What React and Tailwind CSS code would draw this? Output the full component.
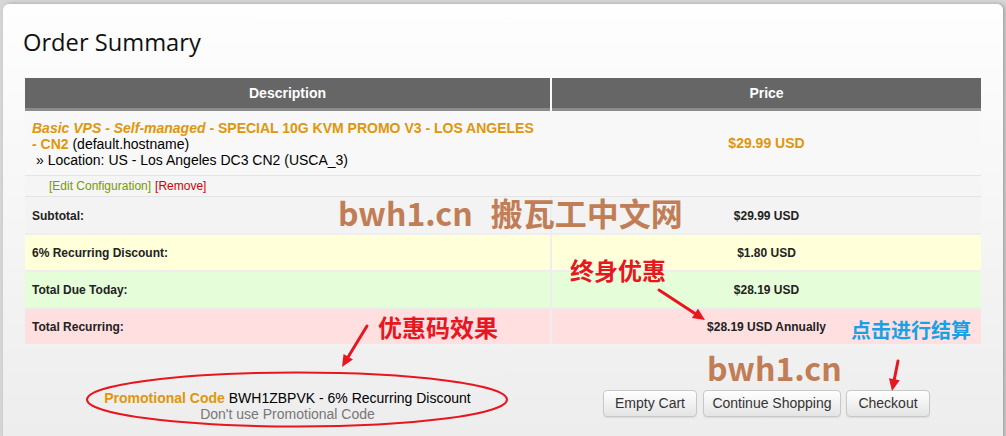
import React from "react";

const sans = { fontFamily: '"Liberation Sans", Arial, sans-serif' };
const cjk = { fontFamily: '"Noto Sans CJK SC", "Noto Sans", sans-serif' };

const summaryRows = [
    { label: "Subtotal:", value: "$29.99 USD", bg: "bg-[#f3f3f3]", h: "h-[36px]" },
    { label: "6% Recurring Discount:", value: "$1.80 USD", bg: "bg-[#ffffd9]", h: "h-[35px]" },
    { label: "Total Due Today:", value: "$28.19 USD", bg: "bg-[#e5fdd9]", h: "h-[35px]" },
    { label: "Total Recurring:", value: "$28.19 USD Annually", bg: "bg-[#ffdfdf]", h: "h-[35px]" },
];

const Arrow = ({ x1, y1, x2, y2 }) => {
    // arrow head at x2,y2
    const a = Math.atan2(y2 - y1, x2 - x1);
    const len = 12;
    const w = 5.5;
    const bx = x2 - len * Math.cos(a);
    const by = y2 - len * Math.sin(a);
    const px = -Math.sin(a) * w;
    const py = Math.cos(a) * w;
    return (
        <g>
            <line x1={x1} y1={y1} x2={bx} y2={by} stroke="#e8161e" strokeWidth="3" strokeLinecap="round" />
            <polygon points={`${x2},${y2} ${bx + px},${by + py} ${bx - px},${by - py}`} fill="#e8161e" />
        </g>
    );
};

const App = () => {
    return (
        <div className="relative w-[1006px] h-[436px] overflow-hidden bg-[#d6d6d6] pl-[3px] pt-[4px]" style={sans}>
            {/* Panel */}
            <div className="w-[1000px] h-[460px] rounded-md bg-gradient-to-b from-[#fefefe] to-[#ececec] shadow-[2px_0_4px_rgba(0,0,0,0.25)] px-[22px]">
                <h1 className="pt-[20px] mb-[18px] text-[23.7px] leading-[36px] text-[#111] -ml-[2px]" style={{ fontFamily: '"Open Sans", sans-serif' }}>
                    Order Summary
                </h1>

                {/* Table */}
                <div className="w-[956px]">
                    <div className="flex gap-[2px] h-[33px]">
                        <div className="w-[525px] bg-[#666] border-b-[3px] border-[#8c8c8c] flex items-center justify-center text-white font-bold text-[14px]">Description</div>
                        <div className="flex-1 bg-[#666] border-b-[3px] border-[#8c8c8c] flex items-center justify-center text-white font-bold text-[14px]">Price</div>
                    </div>

                    <div className="flex gap-[2px] h-[65px] border-b border-[#e4e4e4] bg-[#f8f8f8]">
                        <div className="w-[525px] pl-[7px] pt-[9px] text-[14px] leading-[16px] text-black">
                            <div className="whitespace-nowrap font-bold text-[#e0960b]">
                                <i>Basic VPS - Self-managed</i> - SPECIAL 10G KVM PROMO V3 - LOS ANGELES
                            </div>
                            <div className="whitespace-nowrap">
                                <b className="text-[#e0960b]">- CN2</b> (default.hostname)
                            </div>
                            <div className="whitespace-nowrap pl-[4px]">» Location: US - Los Angeles DC3 CN2 (USCA_3)</div>
                        </div>
                        <div className="flex-1 flex items-center justify-center font-bold text-[14px] text-[#e0960b]">$29.99 USD</div>
                    </div>

                    <div className="h-[21px] border-b border-[#e4e4e4] bg-[#f5f5f5] pl-[24px] flex items-center text-[12px]">
                        <span className="text-[#779a00]">[Edit Configuration]</span>
                        <span className="ml-[4px] text-[#d40000]">[Remove]</span>
                    </div>

                    <div className="flex flex-col gap-[2px] bg-[#eeeeee]">
                        {summaryRows.map((row) => (
                            <div key={row.label} className={`flex gap-[2px] ${row.h}`}>
                                <div className={`w-[525px] pl-[7px] pt-[1px] flex items-center font-bold text-[12px] text-[#222] ${row.bg}`}>{row.label}</div>
                                <div className={`flex-1 pt-[1px] flex items-center justify-center font-bold text-[12px] text-[#222] ${row.bg}`}>{row.value}</div>
                            </div>
                        ))}
                    </div>

                    {/* Promo + buttons */}
                    <div className="flex gap-[2px] pt-[46px]">
                        <div className="w-[525px] text-center text-[14px] leading-[16px]">
                            <div>
                                <b className="text-[#e0960b]">Promotional Code</b> BWH1ZBPVK - 6% Recurring Discount
                            </div>
                            <div className="text-[#777]">Don't use Promotional Code</div>
                        </div>
                        <div className="flex-1 flex justify-center">
                            <button className="w-[94px] h-[27px] rounded-[4px] border border-[#c8c8c8] bg-gradient-to-b from-white to-[#e4e4e4] text-[14px] text-[#333] shadow-[0_1px_1px_rgba(0,0,0,0.08)]">Empty Cart</button>
                            <button className="ml-[6px] w-[138px] h-[27px] rounded-[4px] border border-[#c8c8c8] bg-gradient-to-b from-white to-[#e4e4e4] text-[14px] text-[#333] shadow-[0_1px_1px_rgba(0,0,0,0.08)]">Continue Shopping</button>
                            <button className="ml-[5px] w-[84px] h-[27px] rounded-[4px] border border-[#c8c8c8] bg-gradient-to-b from-white to-[#e4e4e4] text-[14px] text-[#333] shadow-[0_1px_1px_rgba(0,0,0,0.08)]">Checkout</button>
                        </div>
                    </div>
                </div>
            </div>

            {/* Annotations laid over the screenshot */}
            <svg className="absolute left-0 top-0 pointer-events-none" width="1006" height="436">
                <ellipse cx="297" cy="399.5" rx="210" ry="27" fill="none" stroke="#e8161e" strokeWidth="2" />
                <Arrow x1={659} y1={290} x2={705} y2={320} />
                <Arrow x1={367} y1={326} x2={342} y2={367} />
                <Arrow x1={898} y1={361} x2={892} y2={391} />
            </svg>
            <div className="absolute left-[338px] top-[190px] whitespace-nowrap text-[32px] leading-[44px] font-bold text-[#c17e56]" style={cjk}>
                bwh1.cn<span className="ml-[18px]">搬瓦工中文网</span>
            </div>
            <div className="absolute left-[707px] top-[345px] text-[32px] leading-[44px] font-bold text-[#c17e56]" style={cjk}>bwh1.cn</div>
            <div className="absolute left-[570px] top-[254px] text-[24px] leading-[32px] font-bold text-[#e8161e]" style={cjk}>终身优惠</div>
            <div className="absolute left-[378px] top-[311px] text-[24px] leading-[32px] font-bold text-[#e8161e]" style={cjk}>优惠码效果</div>
            <div className="absolute left-[851px] top-[316px] text-[20px] leading-[28px] font-bold text-[#17a2e6]" style={cjk}>点击进行结算</div>
        </div>
    );
};

export default App;
